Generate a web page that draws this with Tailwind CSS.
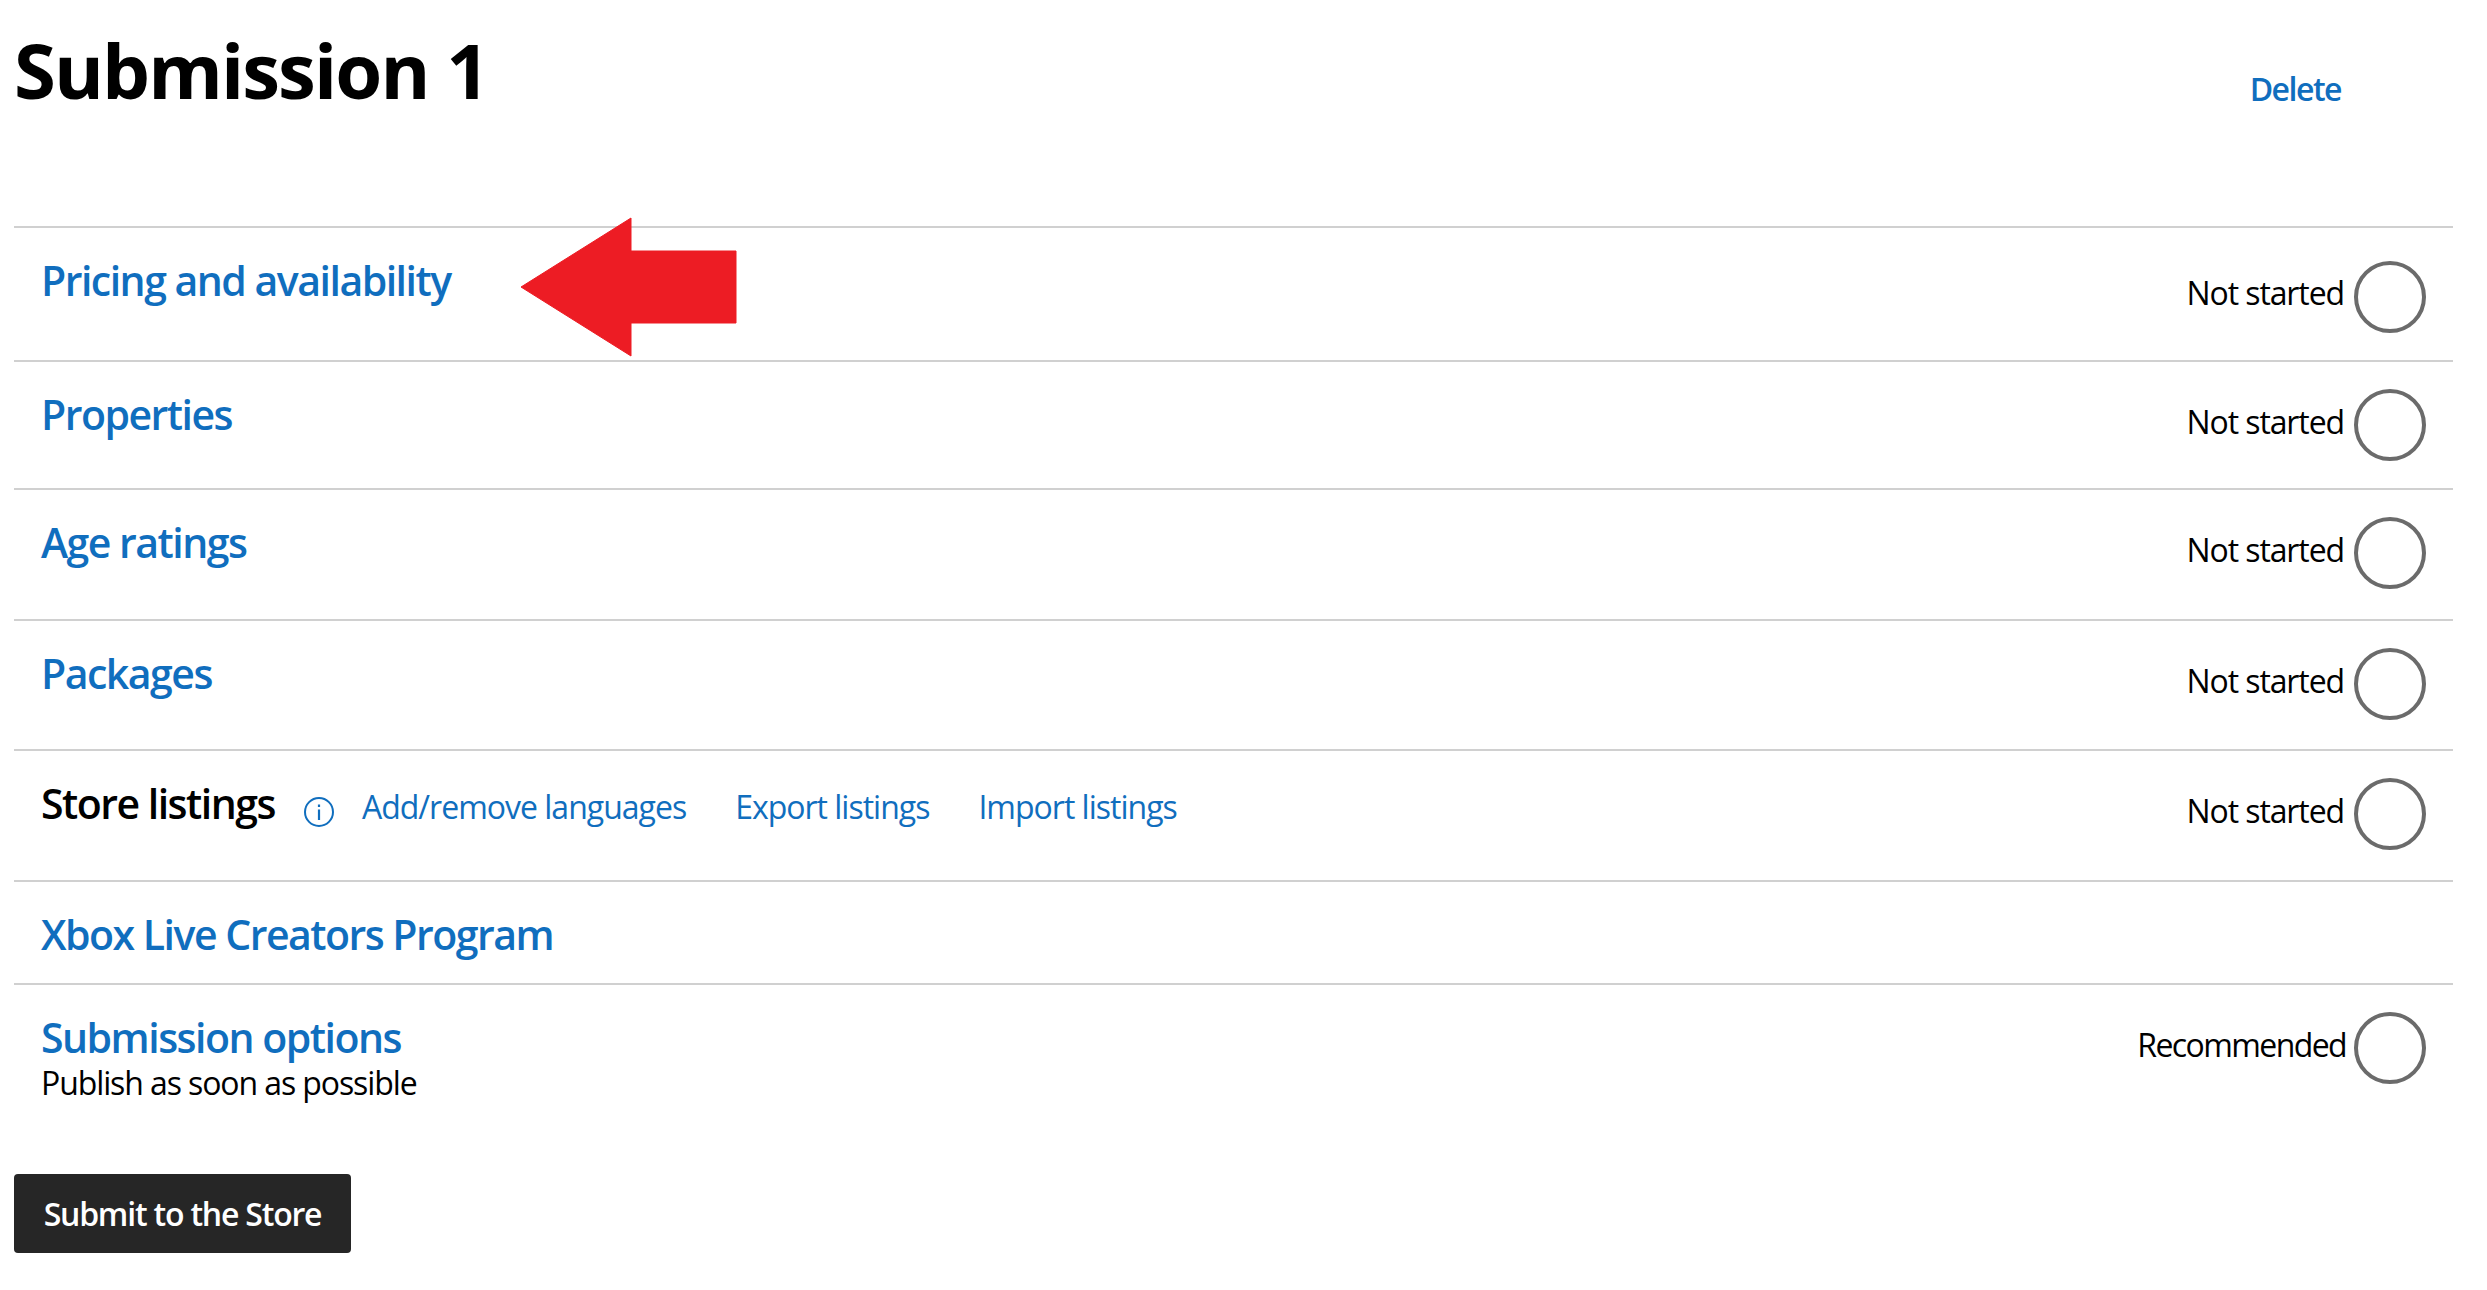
<!DOCTYPE html>
<html lang="en">

<head>
    <title>Submission 1</title>
    <script src="https://cdn.jsdelivr.net/npm/@tailwindcss/browser@4"></script>
</head>

<body class="bg-white text-black font-['Open_Sans',sans-serif]">
    <main class="relative w-[2487px] h-[1290px] overflow-hidden pl-[14px] pr-[34px]">
        <header class="flex justify-between h-[226px]">
            <h1 class="pt-[26px] text-[76px] leading-[88px] font-bold tracking-[-1.9px]">Submission 1</h1>
            <a class="pt-[65px] pr-[112px] text-[32px] leading-[48px] font-semibold tracking-[-1.5px] text-[#106ebe]">Delete</a>
        </header>

        <div class="flex justify-between h-[134px] border-t-2 border-[#d0d0d0] pl-[27px] pr-[27px]">
            <a class="pt-[24px] text-[41px] leading-[56px] font-semibold tracking-[-1.5px] text-[#106ebe]">Pricing and availability</a>
            <div class="flex items-start gap-[10px] pt-[33px]">
                <span class="pt-[8px] text-[32px] leading-[48px] tracking-[-1.1px]">Not started</span>
                <span class="w-[72px] h-[72px] rounded-full border-4 border-[#6b6b6b]"></span>
            </div>
        </div>
        <div class="flex justify-between h-[128px] border-t-2 border-[#d0d0d0] pl-[27px] pr-[27px]">
            <a class="pt-[24px] text-[41px] leading-[56px] font-semibold tracking-[-1.5px] text-[#106ebe]">Properties</a>
            <div class="flex items-start gap-[10px] pt-[27px]">
                <span class="pt-[9px] text-[32px] leading-[48px] tracking-[-1.1px]">Not started</span>
                <span class="w-[72px] h-[72px] rounded-full border-4 border-[#6b6b6b]"></span>
            </div>
        </div>
        <div class="flex justify-between h-[131px] border-t-2 border-[#d0d0d0] pl-[27px] pr-[27px]">
            <a class="pt-[24px] text-[41px] leading-[56px] font-semibold tracking-[-1.5px] text-[#106ebe]">Age ratings</a>
            <div class="flex items-start gap-[10px] pt-[27px]">
                <span class="pt-[9px] text-[32px] leading-[48px] tracking-[-1.1px]">Not started</span>
                <span class="w-[72px] h-[72px] rounded-full border-4 border-[#6b6b6b]"></span>
            </div>
        </div>
        <div class="flex justify-between h-[130px] border-t-2 border-[#d0d0d0] pl-[27px] pr-[27px]">
            <a class="pt-[24px] text-[41px] leading-[56px] font-semibold tracking-[-1.5px] text-[#106ebe]">Packages</a>
            <div class="flex items-start gap-[10px] pt-[27px]">
                <span class="pt-[9px] text-[32px] leading-[48px] tracking-[-1.1px]">Not started</span>
                <span class="w-[72px] h-[72px] rounded-full border-4 border-[#6b6b6b]"></span>
            </div>
        </div>
        <div class="flex justify-between h-[131px] border-t-2 border-[#d0d0d0] pl-[27px] pr-[27px]">
            <div class="flex items-start pt-[24px]">
                <span class="text-[41px] leading-[56px] font-semibold tracking-[-1.5px]">Store listings</span>
                <svg class="mt-[21px] ml-[28px] w-[32px] h-[32px]" viewBox="0 0 32 32" fill="none" stroke="#106ebe">
                    <circle cx="16" cy="16" r="14" stroke-width="2"></circle>
                    <path d="M16 13.5V24" stroke-width="2.2"></path>
                    <path d="M16 8.5V11" stroke-width="2.2"></path>
                </svg>
                <nav class="flex gap-[49px] ml-[27px] pt-[8px] text-[#106ebe] text-[32px] leading-[48px] tracking-[-1px]">
                    <a>Add/remove languages</a>
                    <a>Export listings</a>
                    <a>Import listings</a>
                </nav>
            </div>
            <div class="flex items-start gap-[10px] pt-[27px]">
                <span class="pt-[9px] text-[32px] leading-[48px] tracking-[-1.1px]">Not started</span>
                <span class="w-[72px] h-[72px] rounded-full border-4 border-[#6b6b6b]"></span>
            </div>
        </div>
        <div class="h-[103px] border-t-2 border-[#d0d0d0] pl-[27px] pr-[27px]">
            <a class="block pt-[24px] text-[41px] leading-[56px] font-semibold tracking-[-1.5px] text-[#106ebe]">Xbox Live Creators Program</a>
        </div>
        <div class="flex justify-between border-t-2 border-[#d0d0d0] pl-[27px] pr-[27px]">
            <div class="pt-[24px]">
                <a class="block text-[41px] leading-[56px] font-semibold tracking-[-1.5px] text-[#106ebe]">Submission options</a>
                <p class="text-[32px] leading-[36px] tracking-[-1.1px]">Publish as soon as possible</p>
            </div>
            <div class="flex items-start gap-[8px] pt-[27px]">
                <span class="pt-[9px] text-[32px] leading-[48px] tracking-[-1.6px]">Recommended</span>
                <span class="w-[72px] h-[72px] rounded-full border-4 border-[#6b6b6b]"></span>
            </div>
        </div>

        <button class="absolute left-[14px] top-[1174px] w-[337px] h-[79px] rounded-[4px] bg-[#262626] text-white text-[32px] font-semibold tracking-[-1.2px]">Submit to the Store</button>

        <!-- annotation arrow -->
        <svg class="absolute left-[515px] top-[212px] w-[230px] h-[150px]" viewBox="515 212 230 150">
            <path d="M521 287L631 218V251H736V323H631V356Z" fill="#ed1c24" stroke="#ed1c24" stroke-width="1" stroke-linejoin="round"></path>
        </svg>
    </main>
</body>

</html>
